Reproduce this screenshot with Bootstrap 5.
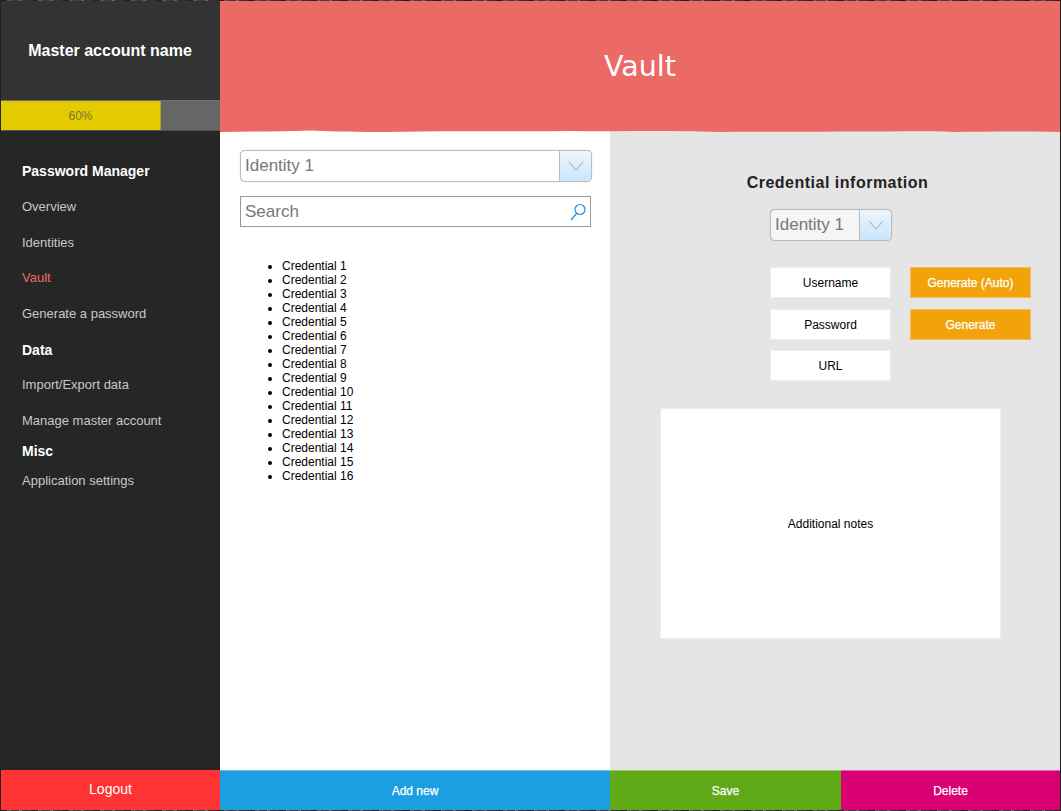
<!doctype html>
<html lang="en">
<head>
<meta charset="utf-8">
<title>Vault</title>
<link href="https://cdn.jsdelivr.net/npm/bootstrap@5.3.0/dist/css/bootstrap.min.css" rel="stylesheet">
<style>
html,body{height:811px;overflow:hidden}
body{font-family:"Liberation Sans",Arial,sans-serif;font-size:12px;color:#000;background:#3a3a3a}
.app-shell{width:1061px;height:811px;padding:1px;background:repeating-linear-gradient(90deg,#222 0 7px,#5a5a5a 7px 11px,#3c3c3c 11px 19px,#666 19px 22px,#333 22px 31px)}
.side-col{width:219px;background:#262626;flex:none}
.acct-box{height:99px;background:#333;color:#fff;font-size:16px;font-weight:700;padding-top:40px;padding-right:1px;text-align:center;line-height:20px}
.usage-bar{height:31px;background:#666;border-top:1px solid #6d6d6d;border-bottom:1px solid #555}
.usage-fill{width:160px;background:#e3cb00;color:#77773a;box-shadow:inset -1px 0 #b5a220;padding-right:1px}
.side-nav{padding:23px 0 0 21px;font-size:13px}
.nav-head{color:#fff;font-weight:700;font-size:14px;height:35px;line-height:35px}
.nav-head.spaced{height:34px;line-height:34px;margin-top:2px}
.nav-entry{color:#c8c8c8;height:35.6px;line-height:35.6px;text-decoration:none;display:block}
.nav-entry.is-current{color:#ec6a66}
.nav-head.tight{height:25px;line-height:25px}
.nav-entry.tight{height:33px;line-height:33px}
.hero-bar{height:129px;padding-top:3px;background:#ec6a66;color:#fff;font-family:"DejaVu Sans",sans-serif;font-size:28.5px;position:relative}
.hero-edge{position:absolute;left:0;bottom:-3px;width:100%;height:4px;display:block}
.left-pane{width:390px;background:#fff;padding:20px 18px 0 20px}
.right-pane{width:450px;background:#e5e5e5}
.sketch-combo{height:32px;border:1px solid #bcbcbc;border-radius:5px;background:#fff;font-size:17px;color:#777;box-shadow:0 0 1px #aaa}
.sketch-combo .combo-label{padding-left:4px}
.combo-btn{width:32px;border-left:1px solid #bcbcbc;background:linear-gradient(#eef6fc,#cbe5fb);border-radius:0 5px 5px 0}
.search-box{height:31px;border:1px solid #999;margin-top:14px;font-size:17px;color:#777;padding:0 4px;width:351px}
.cred-list{margin:32px 0 0 0;padding-left:42px;line-height:14px;font-size:12px}
.cred-title{font-size:16px;font-weight:700;letter-spacing:.5px;color:#222;padding:43px 0 0 5px;text-align:center;line-height:20px}
.combo-wrap{width:122px;margin:16px 0 0 160px;background:#f5f5f5}
.field-grid{display:grid;grid-template-columns:121px 121px;column-gap:19px;margin:26px 0 0 160px}
.field-item{height:31px;text-align:center;background:#fff;border:1px solid #eee;margin-bottom:11px;line-height:30px}
.field-item.action{background:#f2a30c;border-color:#f5bd5a;color:#fff;-webkit-text-stroke:.25px #fff}
.field-item.snug{margin-top:-1px}
.notes-box{width:341px;height:231px;background:#fff;border:1px solid #eee;margin:16px 0 0 50px}
.foot-btn{height:40px;border:0;border-radius:0;color:#fff;font-size:12px;-webkit-text-stroke:.25px #fff;padding:0}
.foot-btn:hover{color:#fff}
.foot-logout{width:219px;background:#ff3333;font-size:14px;-webkit-text-stroke:0;padding-bottom:1px}
.foot-add{width:390px;background:#1c9fe2;border-top:1px solid #6cc1ee}
.foot-save{width:231px;background:#60a917;border-top:1px solid #9cc96b}
.foot-del{width:219px;background:#d80073;border-top:1px solid #e766ab}
</style>
</head>
<body>
<div class="app-shell d-flex flex-column">
  <div class="d-flex flex-grow-1">
    <aside class="side-col d-flex flex-column">
      <div class="acct-box">Master account name</div>
      <div class="usage-bar d-flex">
        <div class="usage-fill d-flex align-items-center justify-content-center">60%</div>
      </div>
      <nav class="side-nav">
        <div class="nav-head">Password Manager</div>
        <a class="nav-entry" href="#">Overview</a>
        <a class="nav-entry" href="#">Identities</a>
        <a class="nav-entry is-current" href="#">Vault</a>
        <a class="nav-entry" href="#">Generate a password</a>
        <div class="nav-head spaced">Data</div>
        <a class="nav-entry" href="#">Import/Export data</a>
        <a class="nav-entry" href="#">Manage master account</a>
        <div class="nav-head tight">Misc</div>
        <a class="nav-entry tight" href="#">Application settings</a>
      </nav>
    </aside>
    <main class="d-flex flex-column flex-grow-1">
      <header class="hero-bar d-flex align-items-center justify-content-center">Vault
        <svg class="hero-edge" viewBox="0 0 840 4" preserveAspectRatio="none" aria-hidden="true"><path fill="#ec6a66" d="M0 0H840V3C800 2 770 2.5 735 3C700 1.5 660 3 620 2.5C580 3.5 540 2 500 3C450 1 400 3 350 2C300 3 250 1.5 200 2.5C150 3.5 110 2.5 90 1.5C60 3 30 2 0 3Z"/></svg>
      </header>
      <div class="d-flex flex-grow-1">
        <section class="left-pane">
          <div class="sketch-combo d-flex align-items-center justify-content-between">
            <span class="combo-label">Identity 1</span>
            <span class="combo-btn h-100 d-flex align-items-center justify-content-center">
              <svg width="16" height="10" viewBox="0 0 16 10" aria-hidden="true"><path d="M1 1l7 8 7-8" fill="none" stroke="#a9b6c0" stroke-width="1.1"/></svg>
            </span>
          </div>
          <div class="search-box d-flex align-items-center justify-content-between">
            <span>Search</span>
            <svg width="16" height="18" viewBox="0 0 16 18" aria-hidden="true"><circle cx="10" cy="6.5" r="5" fill="none" stroke="#1c8fe2" stroke-width="1.2"/><path d="M6.5 10.5L1 17" fill="none" stroke="#1c8fe2" stroke-width="1.2"/></svg>
          </div>
          <ul class="cred-list">
            <li>Credential 1</li><li>Credential 2</li><li>Credential 3</li><li>Credential 4</li>
            <li>Credential 5</li><li>Credential 6</li><li>Credential 7</li><li>Credential 8</li>
            <li>Credential 9</li><li>Credential 10</li><li>Credential 11</li><li>Credential 12</li>
            <li>Credential 13</li><li>Credential 14</li><li>Credential 15</li><li>Credential 16</li>
          </ul>
        </section>
        <section class="right-pane">
          <div class="cred-title">Credential information</div>
          <div class="sketch-combo combo-wrap d-flex align-items-center justify-content-between">
            <span class="combo-label">Identity 1</span>
            <span class="combo-btn h-100 d-flex align-items-center justify-content-center">
              <svg width="16" height="10" viewBox="0 0 16 10" aria-hidden="true"><path d="M1 1l7 8 7-8" fill="none" stroke="#a9b6c0" stroke-width="1.1"/></svg>
            </span>
          </div>
          <div class="field-grid">
            <div class="field-item">Username</div>
            <div class="field-item action">Generate (Auto)</div>
            <div class="field-item">Password</div>
            <div class="field-item action">Generate</div>
            <div class="field-item snug">URL</div>
          </div>
          <div class="notes-box d-flex align-items-center justify-content-center">Additional notes</div>
        </section>
      </div>
    </main>
  </div>
  <footer class="d-flex">
    <button class="btn foot-btn foot-logout" type="button">Logout</button>
    <button class="btn foot-btn foot-add" type="button">Add new</button>
    <button class="btn foot-btn foot-save" type="button">Save</button>
    <button class="btn foot-btn foot-del" type="button">Delete</button>
  </footer>
</div>
<script src="https://cdn.jsdelivr.net/npm/bootstrap@5.3.0/dist/js/bootstrap.bundle.min.js"></script>
</body>
</html>
